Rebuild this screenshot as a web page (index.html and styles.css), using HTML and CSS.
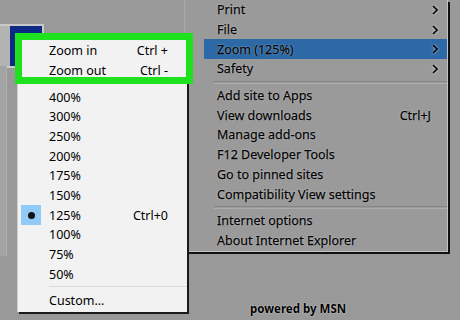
FILE: index.html
```html
<!DOCTYPE html>
<html lang="en">
<head>
    <meta charset="UTF-8">
    <title>Zoom menu</title>
    <link rel="stylesheet" href="styles.css">
</head>
<body>
    <div class="page">
        <div class="tab-box"><div class="tab-fill"></div></div>
        <div class="side-strip"></div>

        <!-- tools menu -->
        <div class="tools-menu">
            <div class="item"><span>Print</span><svg class="arrow" viewBox="0 0 6 10"><path d="M1 1l4 4-4 4"/></svg></div>
            <div class="item"><span>File</span><svg class="arrow" viewBox="0 0 6 10"><path d="M1 1l4 4-4 4"/></svg></div>
            <div class="item active"><span>Zoom (125%)</span><svg class="arrow" viewBox="0 0 6 10"><path d="M1 1l4 4-4 4"/></svg></div>
            <div class="item"><span>Safety</span><svg class="arrow" viewBox="0 0 6 10"><path d="M1 1l4 4-4 4"/></svg></div>
            <div class="sep"></div>
            <div class="item"><span>Add site to Apps</span></div>
            <div class="item"><span>View downloads</span><span class="key">Ctrl+J</span></div>
            <div class="item"><span>Manage add-ons</span></div>
            <div class="item"><span>F12 Developer Tools</span></div>
            <div class="item"><span>Go to pinned sites</span></div>
            <div class="item"><span>Compatibility View settings</span></div>
            <div class="sep"></div>
            <div class="item"><span>Internet options</span></div>
            <div class="item"><span>About Internet Explorer</span></div>
        </div>

        <div class="powered">powered by MSN</div>

        <!-- zoom submenu -->
        <div class="zoom-menu">
            <div class="row"><span class="mark"></span><span class="label">Zoom in</span><span class="key">Ctrl +</span></div>
            <div class="row"><span class="mark"></span><span class="label">Zoom out</span><span class="key">Ctrl -</span></div>
            <div class="sep"></div>
            <div class="row"><span class="mark"></span><span class="label">400%</span></div>
            <div class="row"><span class="mark"></span><span class="label">300%</span></div>
            <div class="row"><span class="mark"></span><span class="label">250%</span></div>
            <div class="row"><span class="mark"></span><span class="label">200%</span></div>
            <div class="row"><span class="mark"></span><span class="label">175%</span></div>
            <div class="row"><span class="mark"></span><span class="label">150%</span></div>
            <div class="row"><span class="mark checked"><i class="dot"></i></span><span class="label">125%</span><span class="key">Ctrl+0</span></div>
            <div class="row"><span class="mark"></span><span class="label">100%</span></div>
            <div class="row"><span class="mark"></span><span class="label">75%</span></div>
            <div class="row"><span class="mark"></span><span class="label">50%</span></div>
            <div class="sep"></div>
            <div class="row"><span class="mark"></span><span class="label">Custom...</span></div>
        </div>

        <div class="highlight-box"></div>
    </div>
</body>
</html>
```

FILE: styles.css
```css
body {
    margin: 0;
    background-color: #999999;
    font-family: "Noto Sans", "Open Sans", sans-serif;
    font-size: 12.5px;
    color: #000;
}

.page {
    position: relative;
    width: 460px;
    height: 320px;
    overflow: hidden;
}

/* blue tab in the top left corner */
.tab-box {
    position: absolute;
    left: -2px;
    top: 24px;
    width: 42px;
    height: 40px;
    border: 2px solid #c9c9c9;
    background-color: #b3b3b3;
}

.tab-fill {
    margin-left: 10px;
    height: 100%;
    background-color: #0c2a84;
}

.side-strip {
    position: absolute;
    left: 0;
    top: 66px;
    width: 6px;
    height: 190px;
    background-color: #a3a3a3;
    border-right: 1px solid #b2b2b2;
}

/* the greyed tools menu */
.tools-menu {
    position: absolute;
    left: 184px;
    top: 0;
    width: 262px;
    padding-bottom: 1px;
    background-color: #9a9a9a;
    border-left: 1px solid #a9a9a9;
    border-right: 1px solid #c4c4c4;
    border-bottom: 1px solid #c4c4c4;
    box-shadow: 2px 2px 0 #111;
}

.tools-menu .item {
    display: flex;
    align-items: center;
    height: 19.7px;
    margin-left: 19px;
    padding-left: 13px;
    padding-right: 9px;
    -webkit-text-stroke: 0.25px #000;
    text-shadow: 0 0 1.5px rgba(255, 255, 255, 0.8);
}

.tools-menu .item span:first-child {
    flex: 1;
}

.tools-menu .item.active {
    background-color: #2c69a6;
}

.tools-menu .arrow {
    width: 6px;
    height: 10px;
    fill: none;
    stroke: #000;
    stroke-width: 1.6;
    filter: drop-shadow(0 0 1px rgba(255, 255, 255, 0.8));
}

.tools-menu .key {
    margin-right: 7px;
}

.tools-menu .sep {
    height: 1px;
    margin: 2px 0 2px 29px;
    border-top: 1px solid #858585;
    border-bottom: 1px solid #adadad;
}

.powered {
    position: absolute;
    left: 250px;
    top: 301px;
    font-size: 11.5px;
    font-weight: bold;
    text-shadow: 0 0 1.5px rgba(255, 255, 255, 0.8);
}

/* zoom submenu */
.zoom-menu {
    position: absolute;
    left: 17px;
    top: 34px;
    width: 169px;
    padding: 7px 0 1px;
    background-color: #f2f2f2;
    border-left: 1px solid #cfcfcf;
    box-shadow: 2px 2px 0 #1a1a1a;
}

.zoom-menu .row {
    display: flex;
    align-items: center;
    height: 19.7px;
    padding-left: 3px;
    padding-right: 19px;
}

.zoom-menu .mark {
    width: 20px;
    height: 100%;
    margin-right: 8px;
    display: flex;
    align-items: center;
    justify-content: center;
}

.zoom-menu .mark.checked {
    background-color: #91c9f7;
}

.zoom-menu .dot {
    width: 7px;
    height: 7px;
    border-radius: 50%;
    background-color: #111;
}

.zoom-menu .label {
    flex: 1;
}

.zoom-menu .sep {
    height: 1px;
    margin: 2.4px 0 2.4px 31px;
    border-top: 1px solid #dcdcdc;
}

.highlight-box {
    position: absolute;
    left: 15px;
    top: 33px;
    width: 164px;
    height: 37px;
    border: 7px solid #1ee21e;
}
```
